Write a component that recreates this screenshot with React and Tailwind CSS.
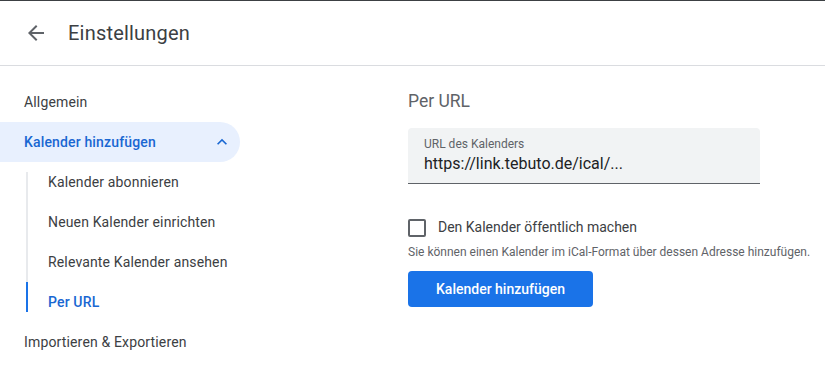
import { useState } from 'react'

const font = { fontFamily: 'Roboto, "Noto Sans", Arial, sans-serif' }

function SubItem({ label, active, first, last }) {
  return (
    <div
      className={`ml-[26px] border-l-2 ${active ? 'border-[#1a73e8]' : 'border-[#e8eaed]'} flex items-center pl-[20px] text-[14px] tracking-[0.15px] ${first ? 'h-[30px] pb-[10px]' : last ? 'h-[30px] pt-[10px]' : 'h-10'} ${active ? 'text-[#1967d2] font-medium' : 'text-[#3c4043]'}`}
    >
      <span className={first || last ? 'leading-5' : ''}>{label}</span>
    </div>
  )
}

export default function App() {
  const [isPublic, setIsPublic] = useState(false)
  const [url, setUrl] = useState('https://link.tebuto.de/ical/...')

  return (
    <div className="w-[825px] h-[384px] bg-white overflow-hidden border-t border-[#3c4043]" style={font}>
      {/* header */}
      <div className="h-[65px] flex items-center border-b border-[#dadce0]">
        <div className="w-[24px] ml-[24px] flex items-center">
          <svg width="24" height="24" viewBox="0 0 24 24" fill="#5f6368">
            <path d="M20 11H7.83l5.59-5.59L12 4l-8 8 8 8 1.41-1.41L7.83 13H20v-2z" />
          </svg>
        </div>
        <h1 className="ml-[20px] text-[20px] tracking-[0.2px] text-[#3c4043] leading-none">Einstellungen</h1>
      </div>

      <div className="flex">
        {/* sidebar */}
        <div className="w-[256px] pr-[16px] pt-[16px]">
          <div className="h-10 flex items-center pl-[24px] text-[14px] tracking-[0.15px] text-[#3c4043]">Allgemein</div>
          <div className="h-10 flex items-center justify-between pl-[24px] pr-[8px] bg-[#e8f0fe] rounded-r-full text-[14px] tracking-[0.15px] font-medium text-[#1967d2]">
            <span>Kalender hinzufügen</span>
            <svg width="20" height="20" viewBox="0 0 24 24" fill="#1967d2">
              <path d="M12 8l-6 6 1.41 1.41L12 10.83l4.59 4.58L18 14z" />
            </svg>
          </div>
          <div className="my-[10px]">
            <SubItem label="Kalender abonnieren" first />
            <SubItem label="Neuen Kalender einrichten" />
            <SubItem label="Relevante Kalender ansehen" />
            <SubItem label="Per URL" active last />
          </div>
          <div className="h-10 flex items-center pl-[24px] text-[14px] tracking-[0.15px] text-[#3c4043]">Importieren &amp; Exportieren</div>
        </div>

        {/* content */}
        <div className="pl-[152px] pt-[23px]">
          <h2 className="text-[17.5px] text-[#5f6368] leading-6">Per URL</h2>
          <div className="mt-[15px] w-[352px] h-[56px] bg-[#f1f3f4] rounded-t-[4px] border-b border-[#5f6368] px-[16px] pt-[8px]">
            <div className="text-[12px] text-[#5f6368] leading-4">URL des Kalenders</div>
            <input
              className="w-full bg-transparent outline-none text-[16px] text-[#202124] leading-6"
              value={url}
              onChange={(e) => setUrl(e.target.value)}
            />
          </div>

          <label className="mt-[33px] flex items-center cursor-pointer">
            <span
              className={`w-[18px] h-[18px] rounded-[2px] border-2 ${isPublic ? 'bg-[#1a73e8] border-[#1a73e8]' : 'border-[#5f6368]'}`}
              onClick={() => setIsPublic(!isPublic)}
            />
            <span className="ml-[12px] text-[14px] text-[#3c4043]">Den Kalender öffentlich machen</span>
          </label>
          <p className="mt-[6px] text-[12px] text-[#5f6368] leading-4">
            Sie können einen Kalender im iCal-Format über dessen Adresse hinzufügen.
          </p>
          <button className="mt-[11px] w-[185px] h-[36px] rounded-[4px] bg-[#1a73e8] text-white text-[14px] font-medium">
            Kalender hinzufügen
          </button>
        </div>
      </div>
    </div>
  )
}
